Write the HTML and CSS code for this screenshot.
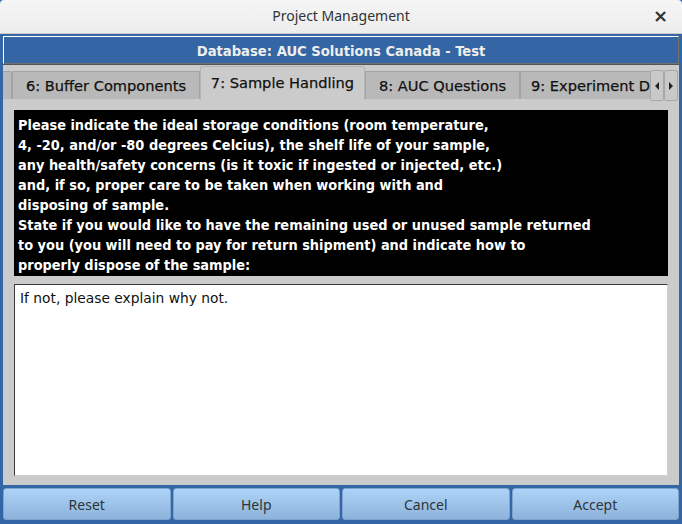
FILE: index.html
```html
<!DOCTYPE html>
<html>
<head>
<meta charset="utf-8">
<link rel="stylesheet" href="styles.css">
</head>
<body>
<div class="window">
  <div class="titlebar">
    <span class="title">Project Management</span>
    <span class="close">×</span>
  </div>
  <div class="frame">
    <div class="banner">Database: AUC Solutions Canada - Test</div>
    <div class="panel">
      <div class="tabbar">
        <div class="tab stub"></div>
        <div class="tab t6">6: Buffer Components</div>
        <div class="tab active t7">7: Sample Handling</div>
        <div class="tab t8">8: AUC Questions</div>
        <div class="tab t9">9: Experiment D</div>
        <div class="scroll">
          <div class="arrow"><svg width="6" height="8" viewBox="0 0 6 8"><path d="M5 0 L1 4 L5 8 Z" fill="#222"/></svg></div>
          <div class="arrow"><svg width="6" height="8" viewBox="0 0 6 8"><path d="M1 0 L5 4 L1 8 Z" fill="#222"/></svg></div>
        </div>
      </div>
      <div class="pane">
        <div class="label">Please indicate the ideal storage conditions (room temperature,<br>4, -20, and/or -80 degrees Celcius), the shelf life of your sample,<br>any health/safety concerns (is it toxic if ingested or injected, etc.)<br>and, if so, proper care to be taken when working with and<br>disposing of sample.<br>State if you would like to have the remaining used or unused sample returned<br>to you (you will need to pay for return shipment) and indicate how to<br>properly dispose of the sample:</div>
        <div class="editor">If not, please explain why not.</div>
      </div>
    </div>
    <div class="buttons">
      <div class="btn">Reset</div>
      <div class="btn">Help</div>
      <div class="btn">Cancel</div>
      <div class="btn">Accept</div>
    </div>
  </div>
</div>
</body>
</html>
```
FILE: styles.css
```css
html, body {
  margin: 0;
  padding: 0;
}
body {
  width: 682px;
  height: 524px;
  overflow: hidden;
  background: #3465a4;
  font-family: "DejaVu Sans", sans-serif;
}
.window {
  width: 682px;
  height: 524px;
  display: flex;
  flex-direction: column;
}
.titlebar {
  height: 33px;
  background: linear-gradient(#f5f5f5, #ededed);
  border-bottom: 1px solid #c9c9c9;
  position: relative;
  display: flex;
  align-items: center;
  justify-content: center;
  border-radius: 4px 4px 0 0;
}
.title {
  font-family: "Noto Sans", sans-serif;
  font-size: 14px;
  color: #2e3436;
  margin-top: -2px;
}
.close {
  position: absolute;
  right: 14px;
  top: 5px;
  font-size: 18px;
  font-weight: bold;
  color: #2e3436;
  font-family: "DejaVu Sans", sans-serif;
}
.frame {
  flex: 1;
  display: flex;
  flex-direction: column;
  padding: 2px 3px 4px 3px;
}
.banner {
  height: 26px;
  border: 1px solid;
  border-color: #ffffff #707070 #707070 #ffffff;
  background: #3465a4;
  color: #eeeeec;
  font-family: "DejaVu Sans Condensed", "DejaVu Sans", sans-serif;
  font-weight: bold;
  font-size: 14.65px;
  display: flex;
  align-items: center;
  justify-content: center;
  box-shadow: 0 1px 0 #555;
}
.panel {
  margin-top: 1px;
  background: #cbcbcb;
  height: 420px;
  display: flex;
  flex-direction: column;
}
.tabbar {
  height: 35px;
  display: flex;
  align-items: flex-end;
  position: relative;
}
.tab {
  height: 28px;
  margin-bottom: 1px;
  background: #b9b9b9;
  border: 1px solid #a3a3a3;
  border-bottom: none;
  font-size: 14.6px;
  -webkit-text-stroke: 0.25px #111;
  color: #111;
  display: flex;
  align-items: center;
  justify-content: center;
  box-sizing: border-box;
  white-space: nowrap;
  overflow: hidden;
}
.tab.stub {
  width: 9px;
  margin-left: 0;
  border-left: none;
  border-radius: 0 3px 0 0;
}
.tab.t6 { width: 188px; }
.tab.active {
  height: 34px;
  margin-bottom: 0;
  width: 165px;
  background: #cbcbcb;
  border-color: #b5b5b5;
  border-radius: 3px 3px 0 0;
  padding-bottom: 2px;
}
.tab.t8 { width: 155px; }
.tab.t9 {
  width: 130px;
  justify-content: flex-start;
  padding-left: 10px;
  border-right: none;
}
.scroll {
  display: flex;
  height: 31px;
  margin-bottom: -1px;
}
.arrow {
  width: 14px;
  height: 31px;
  box-sizing: border-box;
  background: #c9c9c9;
  border: 1px solid #a8a8a8;
  border-radius: 2px;
  display: flex;
  align-items: center;
  justify-content: center;
}
.pane {
  flex: 1;
  padding: 10px 11px 9px 11px;
  display: flex;
  flex-direction: column;
}
.label {
  background: #000;
  color: #fff;
  font-family: "DejaVu Sans Condensed", "DejaVu Sans", sans-serif;
  font-weight: bold;
  font-size: 14.4px;
  line-height: 20px;
  padding: 5px 4px 1px 4px;
  white-space: nowrap;
  overflow: hidden;
}
.editor {
  margin-top: 8px;
  flex: 1;
  background: #fff;
  border: 1px solid;
  border-color: #3a3a3a #d0d0d0 #d0d0d0 #3a3a3a;
  font-size: 13.8px;
  color: #111;
  padding: 5px 5px;
  line-height: 17px;
}
.buttons {
  margin-top: 3px;
  display: grid;
  grid-template-columns: repeat(4, 1fr);
  gap: 2px;
  height: 32px;
}
.btn {
  background: linear-gradient(#add3f8, #8db3dc);
  border: 1px solid #7ea3cd;
  border-radius: 3px;
  display: flex;
  align-items: center;
  justify-content: center;
  font-family: "Noto Sans", sans-serif;
  font-size: 14px;
  color: #2e3436;
}
```
